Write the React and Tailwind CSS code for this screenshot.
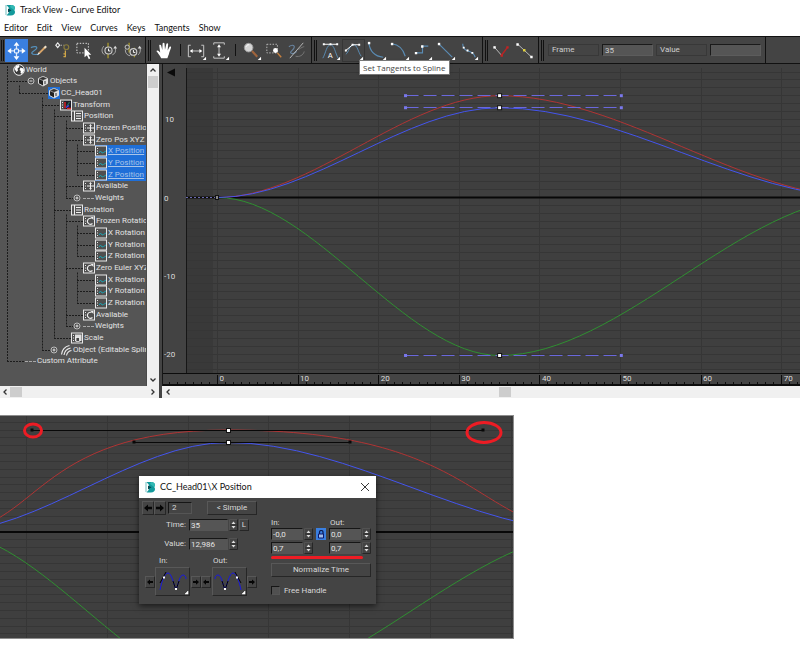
import { useEffect, useState } from "react";
import clsx from "clsx";

const MENUS = ["Editor", "Edit", "View", "Curves", "Keys", "Tangents", "Show"];

// indent classes, one for each depth of the tree
const PAD = {
  world: "pl-[13px]",
  objects: "pl-[27px]",
  head: "pl-[48px]",
  l1: "pl-[60px]",
  l2: "pl-[71px]",
  l3: "pl-[83px]",
  l4: "pl-[95px]",
  weights: "pl-[73px]",
  object: "pl-[50px]",
  custom: "pl-[23px]",
};

const TREE = [
  { label: "World", icon: "globe", pad: "world" },
  { label: "Objects", icon: "cube", pad: "objects", toggle: "minus" },
  { label: "CC_Head01", icon: "cubeBlue", pad: "head" },
  { label: "Transform", icon: "transform", pad: "l1" },
  { label: "Position", icon: "list", pad: "l2" },
  { label: "Frozen Position", icon: "move", pad: "l3" },
  { label: "Zero Pos XYZ", icon: "move", pad: "l3" },
  { label: "X Position", icon: "curve", pad: "l4", selected: true },
  { label: "Y Position", icon: "curve", pad: "l4", selected: true },
  { label: "Z Position", icon: "curve", pad: "l4", selected: true },
  { label: "Available", icon: "move", pad: "l3" },
  { label: "Weights", icon: "dash", pad: "weights", toggle: "plus" },
  { label: "Rotation", icon: "list", pad: "l2" },
  { label: "Frozen Rotation", icon: "rotate", pad: "l3" },
  { label: "X Rotation", icon: "curve", pad: "l4" },
  { label: "Y Rotation", icon: "curve", pad: "l4" },
  { label: "Z Rotation", icon: "curve", pad: "l4" },
  { label: "Zero Euler XYZ", icon: "rotate", pad: "l3" },
  { label: "X Rotation", icon: "curve", pad: "l4" },
  { label: "Y Rotation", icon: "curve", pad: "l4" },
  { label: "Z Rotation", icon: "curve", pad: "l4" },
  { label: "Available", icon: "rotate", pad: "l3" },
  { label: "Weights", icon: "dash", pad: "weights", toggle: "plus" },
  { label: "Scale", icon: "scale", pad: "l2" },
  { label: "Object (Editable Spline)", icon: "arcs", pad: "object", toggle: "plus" },
  { label: "Custom Attribute", icon: "dash", pad: "custom" },
];

// [x, first row, last row]
const TREE_V = [
  [7, 0, 25], [19, 1, 2], [42, 2, 24], [54, 3, 23], [66, 4, 11],
  [66, 12, 22], [77, 6, 9], [77, 13, 16], [77, 17, 20],
];
// [x1, x2, row]
const TREE_H = [
  [7, 27, 1], [19, 48, 2], [42, 60, 3], [54, 71, 4], [66, 83, 5], [66, 83, 6],
  [77, 95, 7], [77, 95, 8], [77, 95, 9], [66, 83, 10], [66, 73, 11], [54, 71, 12],
  [66, 83, 13], [77, 95, 14], [77, 95, 15], [77, 95, 16], [66, 83, 17],
  [77, 95, 18], [77, 95, 19], [77, 95, 20], [66, 83, 21], [66, 73, 22],
  [54, 71, 23], [42, 50, 24], [7, 25, 25],
];
const rowY = (i) => Math.round((303 / 26) * (i + 0.5)) + 0.5;

function range(a, b) {
  const out = [];
  for (let i = a; i <= b; i++) out.push(i);
  return out;
}

function AppLogo() {
  return (
    <svg viewBox="0 0 12 12" className="h-3 w-3 shrink-0">
      <path d="M1 1h2v10H1z" fill="#b9dfe0" />
      <path d="M2.500 1H7c3 0 4 1.600 4 3 0 1-.5 1.600-1 2 .6.4 1 1.200 1 2.200C11 10 9.500 11.500 7 11.500H2.500L5 8.500V4z" fill="#139a9c" />
      <path d="M4 4.500l3.500 1.700L4 8.500z" fill="#07474f" />
      <path d="M7 1c3 0 4 1.600 4 3 0 1-.5 1.600-1 2L6 3z" fill="#33b9b4" />
    </svg>
  );
}

function TreeIcon({ name }) {
  const frame = (
    <>
      <rect x="0.5" y="1" width="11" height="10" fill="#4f4f4f" stroke="#e8e8e8" />
      <path d="M2.500 3v1M2.500 5.500v1M2.500 8v1" stroke="#e8e8e8" />
    </>
  );
  if (name === "dash")
    return <span className="w-[11px] shrink-0 border-t border-dashed border-[#a8a8a8]" />;
  return (
    <svg viewBox="0 0 12 12" className={clsx("h-3 w-3 shrink-0", name === "cubeBlue" && "bg-[#1f6fd8]")}>
      {name === "globe" && (
        <>
          <circle cx="6" cy="6" r="5.300" fill="#3d3d3d" stroke="#f2f2f2" strokeWidth="1" />
          <path d="M3 2l3-1 .5 2-2 1.500.5 2L3.500 8 1.500 5zM7.500 3.500l3 1 .5 2-2 3.500-1.500-1 .3-2L6.500 6z" fill="#fff" />
        </>
      )}
      {(name === "cube" || name === "cubeBlue") && (
        <>
          <path d="M6 1.500l4.500 2v5L6 11 1.500 8.500v-5z" fill="#222" stroke="#eee" strokeWidth="0.900" />
          <path d="M6 1.500l4.500 2L6 5.500l-4.500-2z" fill="#333" stroke="#ccc" strokeWidth="0.600" />
          <path d="M6 5.500V11l4.500-2.500v-5z" fill="#ddd" />
          <path d="M8 6v3" stroke="#333" />
        </>
      )}
      {name === "transform" && (
        <>
          {frame}
          <rect x="4" y="2" width="7" height="8" fill="#1c1c28" />
          <path d="M5 9.500V3" stroke="#d22" strokeWidth="1.500" />
          <path d="M7 9.500h4" stroke="#d22" strokeWidth="1.500" />
          <path d="M7 7l2.500-4" stroke="#2f6f5a" strokeWidth="1.300" />
          <path d="M6 8.500l3-2" stroke="#44f" strokeWidth="1.200" />
        </>
      )}
      {name === "list" && (
        <>
          <rect x="0.500" y="1" width="11" height="10" fill="#555" stroke="#e8e8e8" />
          <path d="M3.500 1v10M5 3.500h5M5 6h5M5 8.500h5" stroke="#f0f0f0" />
        </>
      )}
      {name === "move" && (
        <>
          {frame}
          <path d="M7.500 2.500v7M4 6h7" stroke="#eee" />
          <path d="M6 4l1.500-1.800L9 4zM6 8l1.500 1.800L9 8z" fill="#eee" />
        </>
      )}
      {name === "rotate" && (
        <>
          {frame}
          <path d="M9.500 8.500A3 3 0 1 1 8.500 3.500" fill="none" stroke="#eee" strokeWidth="1.100" />
          <path d="M7.500 2h3v3z" fill="#eee" />
        </>
      )}
      {name === "scale" && (
        <>
          {frame}
          <rect x="4" y="2.500" width="6.500" height="6.500" fill="#ddd" />
          <rect x="5" y="5.500" width="3.500" height="4" fill="#444" stroke="#fff" strokeWidth="0.700" />
        </>
      )}
      {name === "curve" && (
        <>
          {frame}
          <path d="M4 8l1.500-2L7 8l1.500-.5L11 6" fill="none" stroke="#1ba6b5" strokeWidth="0.900" />
        </>
      )}
      {name === "arcs" && (
        <g fill="none" stroke="#eee" strokeWidth="1.100">
          <path d="M1.500 10.500C2 6 5 2.500 9.500 1.500" />
          <path d="M4 11C4.500 7.500 6.500 5 10.500 4" />
          <path d="M6.500 11.500c.5-2.500 2-4.500 5-5" />
        </g>
      )}
    </svg>
  );
}

function Toggle({ kind }) {
  return (
    <svg viewBox="0 0 8 8" className="h-2 w-2 shrink-0">
      <circle cx="4" cy="4" r="3" fill="#4a4a4a" stroke="#c8c8c8" strokeWidth="0.900" />
      <path d={kind === "plus" ? "M2.500 4h3M4 2.500v3" : "M2.500 4h3"} stroke="#eee" strokeWidth="0.900" />
    </svg>
  );
}

function Chevron({ dir }) {
  const d = {
    up: "M1.500 5.500L4 3l2.500 2.500",
    down: "M1.500 2.500L4 5l2.500-2.500",
    left: "M5.500 1.500L3 4l2.500 2.500",
    right: "M2.500 1.500L5 4 2.500 6.500",
  }[dir];
  return (
    <svg viewBox="0 0 8 8" className="h-2 w-2">
      <path d={d} fill="none" stroke="#333" strokeWidth="1.300" />
    </svg>
  );
}

function TreePanel() {
  return (
    <div className="flex w-[159px] shrink-0 flex-col">
      <div className="flex flex-1">
        <div className="relative min-w-0 flex-1 overflow-hidden border-r border-[#4a4a4a] bg-[#555555]">
          <svg className="absolute inset-0 h-full w-full" stroke="#1c1c1c" strokeDasharray="2 1">
            {TREE_V.map(([x, a, b], i) => (
              <line key={i} x1={x + 0.5} x2={x + 0.5} y1={a === 0 ? 2 : rowY(a) + 4} y2={rowY(b)} />
            ))}
            {TREE_H.map(([x1, x2, r], i) => (
              <line key={i} x1={x1} x2={x2} y1={rowY(r)} y2={rowY(r)} />
            ))}
          </svg>
          <ul className="relative flex h-[303px] flex-col">
            {TREE.map((node, i) => (
              <li key={i} className={clsx("flex min-h-0 flex-1 items-center", PAD[node.pad])}>
                {node.toggle && <Toggle kind={node.toggle} />}
                {(node.toggle || node.icon === "dash") && <span className="w-[2px] shrink-0" />}
                <span
                  className={clsx(
                    "flex h-3 items-center gap-px whitespace-nowrap leading-3",
                    node.selected ? "bg-[#1f6fd8] pr-0.5 text-[#a9c4e8] underline" : "text-[#e2e2e2]"
                  )}
                >
                  <TreeIcon name={node.icon} />
                  {node.label}
                </span>
              </li>
            ))}
          </ul>
        </div>
        <div className="flex w-3 flex-col items-center bg-[#f0f0f0]">
          <button aria-label="Scroll up" className="flex h-3 w-3 items-center justify-center">
            <Chevron dir="up" />
          </button>
          <div className="h-3 w-[10px] bg-[#cdcdcd]" />
          <div className="flex-1" />
          <button aria-label="Scroll down" className="flex h-3 w-3 items-center justify-center">
            <Chevron dir="down" />
          </button>
        </div>
      </div>
      <div className="flex h-3 items-center bg-[#f0f0f0]">
        <button aria-label="Scroll left" className="flex w-[10px] justify-center">
          <Chevron dir="left" />
        </button>
        <div className="h-[10px] w-3 bg-[#cdcdcd]" />
        <div className="flex-1" />
        <button aria-label="Scroll right" className="flex w-3 justify-center">
          <Chevron dir="right" />
        </button>
      </div>
    </div>
  );
}

function Key({ x, y }) {
  return <rect x={x - 2} y={y - 2} width="4" height="4" fill="#fff" stroke="#111" />;
}

function Dot({ x, y, fill }) {
  return <rect x={x - 1.5} y={y - 1.5} width="3" height="3" fill={fill} />;
}

// main graph, frame -> x and value -> y
const fx = (f) => 55.5 + 8.06 * f;
const vy = (v) => 133.5 - 7.84 * v;

function mainCurve(v) {
  const y0 = vy(0);
  const y1 = vy(v);
  return `M${fx(0)} ${y0}C${fx(11.67)} ${y0} ${fx(23.33)} ${y1} ${fx(35)} ${y1}C${fx(50.1)} ${y1} ${fx(65.1)} ${y0} ${fx(80.2)} ${y0}`;
}

// how many ten-frame steps fit to the right of the tree
function useSteps() {
  const count = () => Math.floor((window.innerWidth - 162 - fx(0) - 12) / 80.6);
  const [steps, setSteps] = useState(count);
  useEffect(() => {
    const onResize = () => setSteps(count());
    window.addEventListener("resize", onResize);
    return () => window.removeEventListener("resize", onResize);
  }, []);
  return steps;
}

function Graph() {
  const steps = useSteps();
  const peaks = [12.986, 11.45, -20.15];
  return (
    <svg className="block h-[322px] w-full bg-[#3f3f3f]">
      <rect x="1" y="0" width="23" height="309" fill="#434343" />
      <rect x="24" y="4" width="27" height="305" fill="#393939" />
      <g stroke="#363636" shapeRendering="crispEdges">
        {range(-22, 16).map((v) => (
          <line key={v} x1="24" x2="100%" y1={vy(v)} y2={vy(v)} />
        ))}
        {range(0, steps).map((n) => (
          <line key={n} x1={fx(n * 10)} x2={fx(n * 10)} y1="4" y2="309" />
        ))}
      </g>
      <line x1="24" x2="100%" y1="133.500" y2="133.500" stroke="#080808" strokeWidth="2" />
      <line x1="24.500" x2="24.500" y1="4" y2="309" stroke="#161616" />
      <line x1="0.500" x2="0.500" y1="0" y2="322" stroke="#161616" />
      <path d="M5 8.500l8-4v8z" fill="#0a0a0a" />
      <line x1="24" x2={fx(0)} y1="133.500" y2="133.500" stroke="#6a6ab0" strokeDasharray="2 2" />
      <g fill="none">
        <path d={mainCurve(12.986)} stroke="#b03434" />
        <path d={mainCurve(-20.15)} stroke="#2f8f31" />
        <path d={mainCurve(11.45)} stroke="#4455ee" />
      </g>
      {peaks.map((v) => (
        <g key={v}>
          <line x1={fx(23.33)} x2={fx(50.1)} y1={Math.floor(vy(v)) + 0.5} y2={Math.floor(vy(v)) + 0.5} stroke="#6a68dc" strokeDasharray="13 5" />
          <Dot x={fx(23.33)} y={vy(v)} fill="#7a78ec" />
          <Dot x={fx(50.1)} y={vy(v)} fill="#7a78ec" />
          <Key x={fx(35)} y={vy(v)} />
        </g>
      ))}
      <rect x={fx(0) - 2} y="131.500" width="3" height="4" fill="#888" stroke="#111" />
      <g fill="#dcdcdc">
        <text x="3" y="58">10</text>
        <text x="2" y="137">0</text>
        <text x="2" y="215">-10</text>
        <text x="2" y="293">-20</text>
      </g>
      {/* frame ruler */}
      <rect x="1" y="310" width="100%" height="10" fill="#444444" />
      <g stroke="#0c0c0c" shapeRendering="crispEdges">
        <line x1="1" x2="100%" y1="309.500" y2="309.500" />
        <line x1="1" x2="100%" y1="320.500" y2="320.500" strokeWidth="2" />
        {range(-6, steps * 10 + 9).map((f) => (
          <line key={f} x1={fx(f)} x2={fx(f)} y1={f % 10 === 0 ? 311 : 318} y2="320" />
        ))}
      </g>
      <g fill="#dcdcdc">
        {range(0, steps).map((n) => (
          <text key={n} x={fx(n * 10) + 2} y="317">
            {n * 10}
          </text>
        ))}
      </g>
    </svg>
  );
}

function GraphPanel() {
  return (
    <div className="flex min-w-0 flex-1 flex-col">
      <Graph />
      <div className="flex h-3 items-center bg-[#f0f0f0]">
        <button aria-label="Scroll left" className="flex w-3 justify-center">
          <Chevron dir="left" />
        </button>
        <div className="w-[51%]" />
        <div className="h-[10px] w-3 bg-[#cdcdcd]" />
      </div>
    </div>
  );
}

const SHAPES = {
  move: (
    <g fill="#fff">
      <path d="M12 3l3 4h-6zM12 22l3-4h-6zM2.500 12.500l4-3v6zM21.500 12.500l-4-3v6z" />
      <path d="M12 6v13M6 12.500h12" stroke="#dbe8fa" strokeWidth="1.300" />
      <path d="M10 10.500h4v4h-4z" fill="#3a7fe0" stroke="#fff" />
    </g>
  ),
  pencil: (
    <g fill="none">
      <path d="M3 9c4-2 7-1 6 1s-6 3-5 5 5 1 7 1" stroke="#5590bb" strokeWidth="1.200" />
      <path d="M11.500 15l6-6" stroke="#d8a468" strokeWidth="2.200" />
      <path d="M17 9.500l2-2" stroke="#f0e0c8" strokeWidth="2.200" />
      <path d="M9.500 17l1.500-3 1.500 1.500z" fill="#eee" />
    </g>
  ),
  keys: (
    <g fill="none">
      <path d="M7 4l2 2.500L7 9 5 6.500z" stroke="#eee" strokeWidth="1.200" />
      <path d="M10 6.500h1.500M13 6.500h1" stroke="#bbb" />
      <circle cx="16" cy="8.500" r="2.500" stroke="#8a7c3c" strokeWidth="1.200" />
      <path d="M15 12v7M15 15.500h-2M15 18.500h-2" stroke="#d0a648" strokeWidth="1.300" />
    </g>
  ),
  select: (
    <g fill="none">
      <path d="M3 4.500h12v10H3z" stroke="#ddd" strokeDasharray="1.500 1.500" />
      <path d="M11 9v10l2.500-2 2 4 1.500-1-2-3.500h3z" fill="#fff" />
    </g>
  ),
  clock: (
    <g fill="none" stroke="#aaa">
      <path d="M11.500 4v16" stroke="#a5962e" strokeWidth="1.400" />
      <circle cx="12" cy="12" r="3.700" fill="#444" stroke="#ccc" strokeWidth="1.200" />
      <path d="M12 10v2.500h2" stroke="#fff" />
      <path d="M7 7.500c-2.500 3-2.500 7 1 9M16 16.500c3-1 4-4 3-7" strokeWidth="1" />
      <path d="M17 10l2-3 2 3z" fill="#ddd" stroke="none" />
    </g>
  ),
  clocks: (
    <g fill="none" stroke="#aaa">
      <path d="M9.500 4v10M15 9v10" stroke="#a5962e" strokeWidth="1.400" />
      <circle cx="7.500" cy="8.500" r="2.200" fill="#444" stroke="#ccc" />
      <path d="M5.500 11c0 4 2 6 5 6.500M19 16.500c2-2 2.500-4 2-7" />
      <circle cx="14" cy="13.500" r="3.500" fill="#444" stroke="#ccc" strokeWidth="1.200" />
      <path d="M14 11.500V14h2" stroke="#fff" />
      <path d="M18.500 10l2-3 2 3z" fill="#ddd" stroke="none" />
    </g>
  ),
  hand: (
    <path
      d="M8.500 20C7 17 5 14.500 3.500 12.500c1-1.200 2.500-.3 4 1.500L6.500 6.500c.8-.9 1.800-.4 2 .4l1.200 4.600L10 4.700c.5-1.200 1.800-1 2 0l.5 6.600L14 5c.6-1 1.800-.7 1.800.3L15.300 12l2-4c.9-.7 1.800 0 1.500 1L17 14c-.4 2.500-1.500 4-2 6z"
      fill="#fff"
    />
  ),
  hrange: (
    <g fill="none" stroke="#ccc">
      <path d="M6 6.500H3.500v12H6M17 6.500h2.500v12H17" />
      <path d="M6 12.500h11" />
      <path d="M5 12.500l3-2v4zM18 12.500l-3-2v4z" fill="#fff" stroke="none" />
    </g>
  ),
  vrange: (
    <g fill="none" stroke="#ccc">
      <path d="M6 6V4h11v2M6 18v2h11v-2" />
      <path d="M11.500 7v10" />
      <path d="M11.500 5.500l-2 3h4zM11.500 18.500l-2-3h4z" fill="#fff" stroke="none" />
    </g>
  ),
  zoom: (
    <g>
      <path d="M12.500 12.500l5.500 6" stroke="#a0643c" strokeWidth="2.200" />
      <circle cx="9" cy="9" r="4.500" fill="#d4d4d4" stroke="#999" />
      <path d="M6.500 8c.5-1.500 1.500-2 3-2" stroke="#fff" fill="none" />
    </g>
  ),
  zoomRegion: (
    <g fill="none">
      <path d="M4 5.500h11v9H4z" stroke="#bbb" strokeDasharray="1.500 1.500" />
      <circle cx="13" cy="12" r="2.500" fill="#fff" />
      <path d="M15 14.500l4 4.500" stroke="#c8803e" strokeWidth="1.500" />
    </g>
  ),
  isolate: (
    <g fill="none">
      <path d="M3 8c4-3 7-1 5 2s-5 4-2 5 4-1 5-2" stroke="#6884a0" strokeWidth="1.200" />
      <path d="M4 20L18 4" stroke="#bbb" />
      <path d="M10 18c4 1 8-1 9-5M13 11c3-2 5-3 6-3" stroke="#777" />
    </g>
  ),
  tanAuto: (
    <g fill="none">
      <path d="M4 20C7 15 8 6 12 6s5 9 8 14" stroke="#5a8cb4" />
      <path d="M5 5.500h14" stroke="#fff" />
      <path d="M4 4.500h2v2H4zM11 4.500h2v2h-2zM18 4.500h2v2h-2z" fill="#fff" />
      <text x="9" y="20" fill="#fff" fontSize="8">A</text>
    </g>
  ),
  tanSpline: (
    <g fill="none">
      <path d="M4 16C7 14 8 6 12 6s5 8 8 12" stroke="#5a8cb4" />
      <path d="M4 12l7-6h7" stroke="#fff" />
      <path d="M3 11h2v2H3zM10 5h2v2h-2zM17 5h2v2h-2z" fill="#fff" />
    </g>
  ),
  tanFast: (
    <g fill="none">
      <path d="M4 4c1 8 6 14 15 15" stroke="#5a8cb4" strokeWidth="1.200" />
      <path d="M3 3h2.500v2.500H3z" fill="#fff" />
    </g>
  ),
  tanSlow: (
    <g fill="none">
      <path d="M4 5c8 1 12 6 14 13" stroke="#5a8cb4" strokeWidth="1.200" />
      <path d="M3 4h2.500v2.500H3z" fill="#fff" />
    </g>
  ),
  tanStep: (
    <g fill="none">
      <path d="M6 14.500h6v-7h6" stroke="#5a8cb4" strokeWidth="1.200" />
      <path d="M4 13.500h2.500V16H4zM10.500 6.500H13V9h-2.500z" fill="#fff" />
    </g>
  ),
  tanLinear: (
    <g fill="none">
      <path d="M5 5l14 14" stroke="#5a8cb4" strokeWidth="1.200" />
      <path d="M4 4h2.500v2.500H4z" fill="#fff" />
    </g>
  ),
  tanSmooth: (
    <g fill="none">
      <path d="M6 5c0 4 2 6 4 7s7 1 9 7" stroke="#5a8cb4" strokeWidth="1.200" />
      <path d="M6 8h2v2H6zM10 11h2v2h-2zM15 13.500h2v2h-2z" fill="#fff" />
    </g>
  ),
  breakTan: (
    <g fill="none">
      <path d="M5 9l7 8" stroke="#bbb" />
      <path d="M12 17l6-8" stroke="#b82424" strokeWidth="1.500" />
      <path d="M3.500 7.500H6V10H3.500z" fill="#fff" />
      <path d="M11 16h2.500v2.500H11zM17 7.500h2.500V10H17z" fill="#c02424" />
    </g>
  ),
  unifyTan: (
    <g fill="none">
      <path d="M5 5.500l14 13" stroke="#bbb" />
      <path d="M3.500 4.500H6V7H3.500zM18 17.500h2.500V20H18z" fill="#fff" />
      <path d="M10.500 10.500H13V13h-2.500z" fill="#e8d83c" />
    </g>
  ),
};

function Tool({ name, label, active, hot, flyout, children }) {
  return (
    <button
      aria-label={label}
      className={clsx(
        "relative flex h-[23px] w-[23px] shrink-0 items-center justify-center",
        active && "bg-[#3a7fe0]",
        hot && "border border-[#363636]"
      )}
    >
      <svg viewBox="0 0 24 24" className="h-[23px] w-[23px] shrink-0">
        {SHAPES[name]}
        {flyout && <path d="M22 18.500V22h-3.500z" fill="#fff" />}
      </svg>
      {children}
    </button>
  );
}

function Grip({ tight }) {
  return <span className={clsx("h-[21px] w-[3px] shrink-0 border-x border-[#111]", tight ? "mx-px" : "mx-[2px]")} />;
}

function Sep() {
  return <span className="mx-1 h-3 w-px shrink-0 bg-[#111]" />;
}

function Group({ children }) {
  return <div className="flex h-[27px] items-center border-r border-[#111] pr-[2px]">{children}</div>;
}

function Toolbar() {
  const [frame, setFrame] = useState("35");
  const [value, setValue] = useState("");
  const sunken = "h-3 w-[51px] border border-t-[#1a1a1a] border-l-[#1a1a1a] border-r-[#5c5c5c] border-b-[#5c5c5c]";
  return (
    <div className="flex h-7 items-center border-y border-[#111] bg-[#444444]">
      <Group>
        <Grip tight />
        <Tool name="move" label="Move Keys" active />
        <Tool name="pencil" label="Draw Curves" />
        <Tool name="keys" label="Add Keys" />
        <Tool name="select" label="Region Keys" />
        <Tool name="clock" label="Retime" />
        <Tool name="clocks" label="Retime All" />
      </Group>
      <Group>
        <Grip />
        <Tool name="hand" label="Pan" />
        <Sep />
        <Tool name="hrange" label="Frame Horizontal Extents" flyout />
        <Tool name="vrange" label="Frame Value Extents" flyout />
        <Sep />
        <Tool name="zoom" label="Zoom" flyout />
        <Tool name="zoomRegion" label="Zoom Region" />
        <Tool name="isolate" label="Isolate Curve" />
      </Group>
      <Group>
        <Grip />
        <Tool name="tanAuto" label="Set Tangents to Auto" flyout />
        <Tool name="tanSpline" label="Set Tangents to Spline" hot flyout>
          <span role="tooltip" className="absolute left-4 top-5 z-10 h-[15px] whitespace-nowrap border border-[#777] bg-white px-[3px] font-['Open_Sans',sans-serif] leading-[13px] text-[#444] shadow">
            Set Tangents to Spline
          </span>
        </Tool>
        <Tool name="tanFast" label="Set Tangents to Fast" flyout />
        <Tool name="tanSlow" label="Set Tangents to Slow" flyout />
        <Tool name="tanStep" label="Set Tangents to Stepped" flyout />
        <Tool name="tanLinear" label="Set Tangents to Linear" flyout />
        <Tool name="tanSmooth" label="Set Tangents to Smooth" flyout />
      </Group>
      <Group>
        <Grip />
        <Tool name="breakTan" label="Break Tangents" />
        <Tool name="unifyTan" label="Unify Tangents" />
      </Group>
      <Group>
        <Grip />
        <div className="flex gap-[3px] pl-[2px] pr-[2px] leading-[10px] text-[#cfcfcf]">
          <label htmlFor="frame" className="h-3 w-[51px] border border-[#383838] pl-[3px]">Frame</label>
          <input id="frame" value={frame} onChange={(e) => setFrame(e.target.value)} className={clsx(sunken, "bg-[#555555] pl-[2px]")} />
          <label htmlFor="value" className="h-3 w-[51px] border border-[#383838] pl-[3px]">Value</label>
          <input id="value" value={value} onChange={(e) => setValue(e.target.value)} className={clsx(sunken, "bg-[#555555] pl-[2px]")} />
        </div>
      </Group>
    </div>
  );
}

const RAISED = "border border-t-[#585858] border-l-[#585858] border-r-[#262626] border-b-[#262626]";
const SUNKEN = "border border-t-[#161616] border-l-[#161616] border-r-[#555555] border-b-[#555555]";

function Spinner() {
  return (
    <svg viewBox="0 0 9 12" className="h-3 w-[9px] shrink-0">
      <path d="M0.500 11.500v-11h8" fill="none" stroke="#525252" />
      <path d="M8.500 0.500v11h-8" fill="none" stroke="#262626" />
      <path d="M4.500 2.500L6.500 5h-4zM4.500 9.500L6.500 7h-4z" fill="#ddd" />
      <path d="M1 6h7" stroke="#2a2a2a" />
    </svg>
  );
}

function NumField({ label, value, width }) {
  const [val, setVal] = useState(value);
  return (
    <span className="flex gap-px">
      <input
        aria-label={label}
        value={val}
        onChange={(e) => setVal(e.target.value)}
        className={clsx(SUNKEN, "h-3 bg-[#555555] pl-px leading-[10px] text-[#e4e4e4]", width)}
      />
      <Spinner />
    </span>
  );
}

function Arrow({ flip, label, small }) {
  return (
    <button aria-label={label} className={clsx(RAISED, "flex items-center justify-center", small ? "h-3 w-[10px]" : "h-[14px] w-3")}>
      <svg viewBox="0 0 8 8" className={clsx("shrink-0", small ? "h-[6px] w-[6px]" : "h-2 w-2", flip && "-scale-x-100")}>
        <path d="M0 4l4-3.500v2.300h4v2.400H4v2.300z" fill="#050505" />
      </svg>
    </button>
  );
}

function TangentButton({ out }) {
  return (
    <button aria-label={out ? "Out tangent" : "In tangent"} className={clsx(RAISED, "h-[29px] w-[35px]")}>
      <svg viewBox="0 0 33 27" className="h-[27px] w-[33px]">
        <g transform={out ? "translate(32 0) scale(-1 1)" : undefined}>
          <path d="M4 22C6 12 9 5 12 5s5 8 8 17c3-9 4-15 7-15 2 0 3 2 3 4" fill="none" stroke="#1818e0" />
          <path d="M4 15l6-11M17 13l3 9 3-9" fill="none" stroke="#050505" />
          <path d="M7 8.500h2v2H7zM19 20h2v2h-2z" fill="#fff" />
        </g>
        <path d="M32 23v3h-3z" fill="#fff" stroke="#fff" strokeWidth="0.500" />
      </svg>
    </button>
  );
}

function KeyDialog() {
  const [key, setKey] = useState("2");
  const [free, setFree] = useState(false);
  return (
    <div className="absolute left-[139px] top-[61px] w-[237px] bg-[#444444] text-[#d8d8d8] shadow-[0_2px_6px_rgba(0,0,0,0.600)]">
      <div className="flex h-[22px] items-center gap-1 bg-white pl-[5px] pr-[5px] text-[#111]">
        <AppLogo />
        <h2 className="flex-1 font-['Lato','Open_Sans',sans-serif] text-[9px]">CC_Head01\X Position</h2>
        <button aria-label="Close">
          <svg viewBox="0 0 12 12" className="h-3 w-3">
            <path d="M2 2l8 8M10 2l-8 8" stroke="#222" strokeWidth="0.900" />
          </svg>
        </button>
      </div>
      <div className="flex justify-between pb-2 pl-[3px] pr-[5px] pt-[3px]">
        <div className="w-[115px]">
          <div className="flex items-center">
            <Arrow label="Previous key" />
            <Arrow label="Next key" flip />
            <input
              aria-label="Key number"
              value={key}
              onChange={(e) => setKey(e.target.value)}
              className={clsx(SUNKEN, "ml-[2px] h-3 w-6 pl-[3px]")}
            />
            <button className={clsx(RAISED, "ml-auto h-[14px] w-[50px] leading-3")}>&lt; Simple</button>
          </div>
          <div className="mt-1 flex items-center">
            <span className="w-[47px] pr-[3px] text-right">Time:</span>
            <NumField label="Time" value="35" width="w-[39px]" />
            <button className={clsx(RAISED, "ml-px h-3 w-[10px] leading-[10px]")}>L</button>
          </div>
          <div className="mt-[7px] flex items-center">
            <span className="w-[47px] pr-[3px] text-right">Value:</span>
            <NumField label="Value" value="12,986" width="w-[39px]" />
          </div>
          <div className="mt-[5px] flex h-3 leading-3">
            <span className="w-[54px] pl-[17px]">In:</span>
            <span className="pl-[17px]">Out:</span>
          </div>
          <div className="flex items-center justify-between pl-[3px]">
            <Arrow small label="Copy in to previous" />
            <TangentButton />
            <Arrow small flip label="Copy in to out" />
            <Arrow small label="Copy out to in" />
            <TangentButton out />
            <Arrow small flip label="Copy out to next" />
          </div>
        </div>
        <div className="w-[100px] pt-4">
          <div className="flex leading-[11px]">
            <span className="w-[59px]">In:</span>
            <span>Out:</span>
          </div>
          <div className="flex justify-between">
            <NumField label="In value" value="-0,0" width="w-8" />
            <button aria-label="Lock tangents" className="flex h-3 w-[10px] items-center justify-center bg-[#3a7fe0]">
              <svg viewBox="0 0 10 12" className="h-3 w-[10px]">
                <path d="M3.500 6V4c0-2 3.500-2 3.500 0v2" fill="none" stroke="#0b1a50" strokeWidth="1.200" />
                <path d="M2.500 6h5v4h-5z" fill="#9fbcea" stroke="#0b1a70" />
              </svg>
            </button>
            <NumField label="Out value" value="0,0" width="w-8" />
          </div>
          <div className="mt-[2px] flex justify-between">
            <NumField label="In length" value="0,7" width="w-8" />
            <NumField label="Out length" value="0,7" width="w-8" />
          </div>
          <div className="mr-2 mt-[2px] h-[3px] rounded-full bg-[#ed1c24]" />
          <button className={clsx(RAISED, "mt-1 block h-[14px] w-full leading-3")}>Normalize Time</button>
          <label className="mt-2 flex items-center gap-1 leading-[11px]">
            <input
              type="checkbox"
              checked={free}
              onChange={(e) => setFree(e.target.checked)}
              className={clsx(SUNKEN, "h-[9px] w-[9px] appearance-none bg-[#505050] checked:bg-[#3a7fe0]")}
            />
            Free Handle
          </label>
        </div>
      </div>
    </div>
  );
}

function DetailGraph() {
  return (
    <div className="relative w-[64.250%]">
      <svg className="block h-56 w-full border border-l-0 border-[#8d8d8d] bg-[#3f3f3f]">
        <g stroke="#363636" shapeRendering="crispEdges">
          {range(-14, 14).map((v) => (
            <line key={v} x1="0" x2="100%" y1={116 - 7.84 * v} y2={116 - 7.84 * v} />
          ))}
          {range(0, 10).map((n) => (
            <line key={n} x1={26.5 + 80.8 * n} x2={26.5 + 80.8 * n} y1="0" y2="224" />
          ))}
        </g>
        <line x1="0" x2="100%" y1="116" y2="116" stroke="#080808" strokeWidth="2" />
        <g fill="none">
          <path d="M-54 116C40 116 31 14 228 14C484 14 472 116 594 116" stroke="#b03434" />
          <path d="M-54 116C40 116 134 274 228 274C350 274 472 116 594 116" stroke="#2f8f31" />
          <path d="M-54 116C40 116 134 26.500 228 26.500C350 26.500 472 116 594 116" stroke="#4455ee" />
        </g>
        <path d="M32 14.500H483M134 26.500H350" stroke="#080808" />
        {[[32, 14], [483, 14], [134, 26], [350, 26]].map(([x, y]) => (
          <Dot key={x} x={x} y={y} fill="#080808" />
        ))}
        <Key x={228.5} y={14.5} />
        <Key x={228.5} y={26.5} />
        <g fill="none" stroke="#ed1c24" strokeWidth="3">
          <ellipse cx="33" cy="14.500" rx="8.500" ry="6.500" />
          <ellipse cx="484" cy="16.500" rx="17" ry="10" />
        </g>
      </svg>
      <KeyDialog />
    </div>
  );
}

export default function App() {
  return (
    <div className="bg-white pb-2 font-['Roboto','Noto_Sans',sans-serif] text-[8px]">
      <header className="flex h-5 items-center gap-1 pl-1 font-['Lato','Open_Sans',sans-serif] text-[9px] text-[#111]">
        <AppLogo />
        <h1>Track View - Curve Editor</h1>
      </header>
      <nav className="flex h-4 items-center gap-[9px] pl-1 font-['Lato','Open_Sans',sans-serif] text-[9px] text-[#111]">
        {MENUS.map((m) => (
          <button key={m}>{m}</button>
        ))}
      </nav>
      <Toolbar />
      <main>
        <div className="flex bg-[#2e2e2e]">
          <TreePanel />
          <div className="w-[3px] shrink-0 bg-[#444444]" />
          <GraphPanel />
        </div>
        <div className="mt-[17px]">
          <DetailGraph />
        </div>
      </main>
    </div>
  );
}
